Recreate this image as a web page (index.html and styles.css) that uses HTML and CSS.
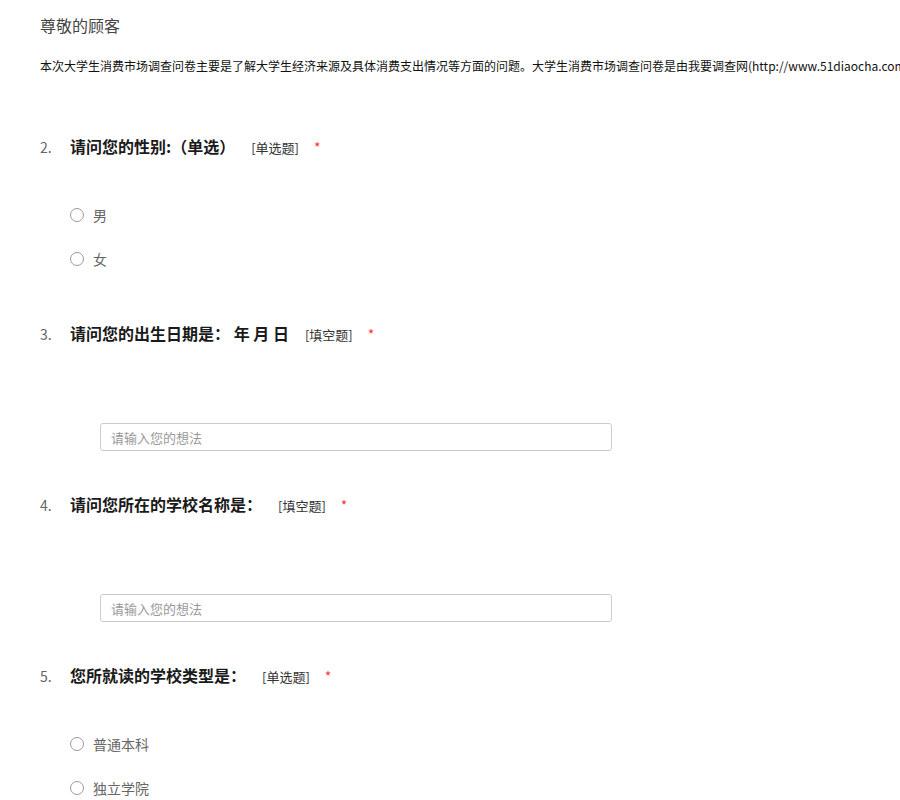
FILE: index.html
```html
<!DOCTYPE html>
<html lang="zh-CN">
<head>
<meta charset="utf-8">
<title>大学生消费市场调查问卷</title>
<link rel="stylesheet" href="styles.css">
</head>
<body>
<div class="page">
  <div class="greeting">尊敬的顾客</div>
  <div class="intro">本次大学生消费市场调查问卷主要是了解大学生经济来源及具体消费支出情况等方面的问题。大学生消费市场调查问卷是由我要调查网(http://www.51diaocha.com)提供的免费问卷模板。</div>

  <div class="question q-choice q-first">
    <div class="q-head">
      <span class="q-num">2.</span>
      <span class="q-title">请问您的性别:（单选）</span>
      <span class="q-type">[单选题]</span>
      <span class="q-req">*</span>
    </div>
    <div class="options">
      <label class="opt"><span class="radio"></span><span class="opt-text">男</span></label>
      <label class="opt"><span class="radio"></span><span class="opt-text">女</span></label>
    </div>
  </div>

  <div class="question q-fill">
    <div class="q-head">
      <span class="q-num">3.</span>
      <span class="q-title">请问您的出生日期是： 年 月 日</span>
      <span class="q-type">[填空题]</span>
      <span class="q-req">*</span>
    </div>
    <input class="answer" type="text" placeholder="请输入您的想法">
  </div>

  <div class="question q-fill">
    <div class="q-head">
      <span class="q-num">4.</span>
      <span class="q-title">请问您所在的学校名称是：</span>
      <span class="q-type">[填空题]</span>
      <span class="q-req">*</span>
    </div>
    <input class="answer" type="text" placeholder="请输入您的想法">
  </div>

  <div class="question q-choice">
    <div class="q-head">
      <span class="q-num">5.</span>
      <span class="q-title">您所就读的学校类型是：</span>
      <span class="q-type">[单选题]</span>
      <span class="q-req">*</span>
    </div>
    <div class="options">
      <label class="opt"><span class="radio"></span><span class="opt-text">普通本科</span></label>
      <label class="opt"><span class="radio"></span><span class="opt-text">独立学院</span></label>
    </div>
  </div>
</div>
</body>
</html>
```

FILE: styles.css
```css
html, body {
  margin: 0;
  padding: 0;
  background: #fff;
  overflow: hidden;
}

body {
  font-family: "Noto Sans CJK SC", "Noto Sans", "Liberation Sans", sans-serif;
  color: #333;
}

.page {
  padding: 15px 0 0 40px;
}

.greeting {
  font-size: 16px;
  line-height: 20px;
  color: #444;
}

.intro {
  margin-top: 21px;
  font-size: 12px;
  line-height: 20px;
  color: #111;
  white-space: nowrap;
  overflow: hidden;
}

.question {
  margin-top: 40px;
}

.question.q-first {
  margin-top: 58px;
}

.q-fill + .question {
  margin-top: 41px;
}

.q-head {
  display: flex;
  align-items: baseline;
  height: 24px;
  line-height: 24px;
  white-space: nowrap;
}

.q-num {
  width: 30px;
  font-size: 14px;
  color: #666;
}

.q-title {
  font-size: 16px;
  font-weight: bold;
  color: #1a1a1a;
}

.q-type {
  margin-left: 16px;
  font-size: 13px;
  color: #333;
}

.q-req {
  margin-left: 15px;
  font-size: 14px;
  color: #f33;
}

.options {
  margin-top: 35px;
  padding-left: 30px;
}

.opt {
  display: flex;
  align-items: center;
  height: 44px;
}

.radio {
  box-sizing: border-box;
  width: 14px;
  height: 14px;
  border: 1px solid #9a9a9a;
  border-radius: 50%;
}

.opt-text {
  margin-left: 9px;
  font-size: 14px;
  line-height: 20px;
  color: #666;
}

.answer {
  display: block;
  box-sizing: border-box;
  margin: 78px 0 0 60px;
  width: 512px;
  height: 28px;
  padding: 0 10px;
  border: 1px solid #ccc;
  border-radius: 3px;
  font-family: inherit;
  font-size: 13px;
  color: #333;
  outline: none;
}

.answer::placeholder {
  color: #999;
}
```
